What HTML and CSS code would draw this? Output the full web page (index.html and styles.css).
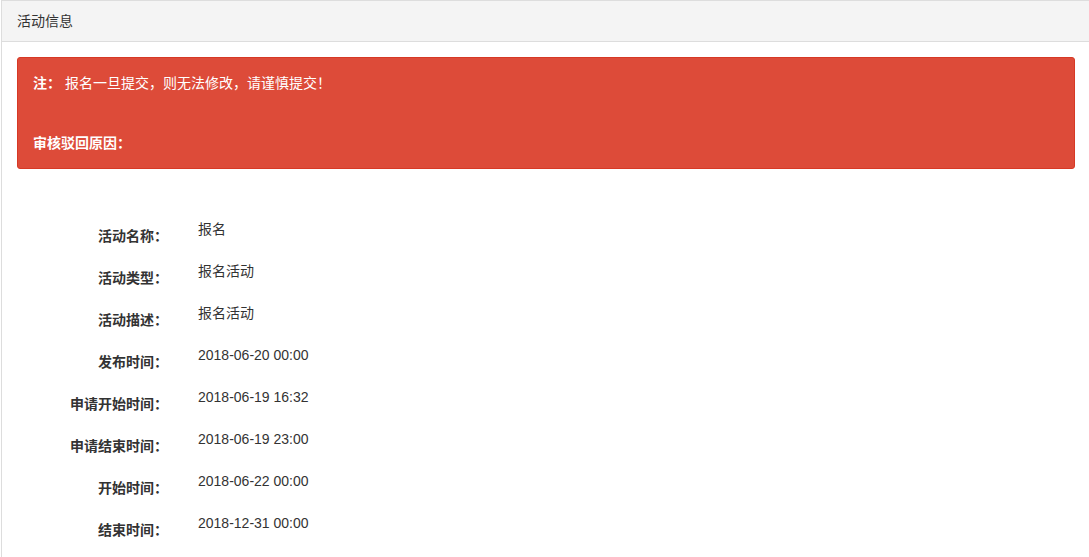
FILE: index.html
```html
<!DOCTYPE html>
<html>
<head>
    <meta charset="utf-8">
    <link rel="stylesheet" href="styles.css">
</head>
<body>

<div class="panel">
    <div class="panel-heading">活动信息</div>
    <div class="panel-body">
        <div class="alert">
            <div><b>注：</b> 报名一旦提交，则无法修改，请谨慎提交！</div>
            <div class="reason"><b>审核驳回原因：</b></div>
        </div>

        <div class="form">
            <div class="form-group">
                <label class="control-label">活动名称：</label>
                <div class="control-value">报名</div>
            </div>
            <div class="form-group">
                <label class="control-label">活动类型：</label>
                <div class="control-value">报名活动</div>
            </div>
            <div class="form-group">
                <label class="control-label">活动描述：</label>
                <div class="control-value">报名活动</div>
            </div>
            <div class="form-group">
                <label class="control-label">发布时间：</label>
                <div class="control-value">2018-06-20 00:00</div>
            </div>
            <div class="form-group">
                <label class="control-label">申请开始时间：</label>
                <div class="control-value">2018-06-19 16:32</div>
            </div>
            <div class="form-group">
                <label class="control-label">申请结束时间：</label>
                <div class="control-value">2018-06-19 23:00</div>
            </div>
            <div class="form-group">
                <label class="control-label">开始时间：</label>
                <div class="control-value">2018-06-22 00:00</div>
            </div>
            <div class="form-group">
                <label class="control-label">结束时间：</label>
                <div class="control-value">2018-12-31 00:00</div>
            </div>
        </div>
    </div>
</div>

</body>
</html>
```

FILE: styles.css
```css
html, body {
    overflow: hidden;
}
body {
    font-family: "Liberation Sans", Arial, "Noto Sans CJK SC", sans-serif;
    font-size: 14px;
    line-height: 20px;
    color: #333;
    margin: 0;
    padding: 0;
    background-color: #fff;
}
.panel {
    margin-left: 1px;
    width: 1088px;
    border: 1px solid #ddd;
    border-bottom: none;
}
.panel-heading {
    padding: 10px 15px;
    background-color: #f4f4f4;
    border-bottom: 1px solid #ddd;
}
.panel-body {
    padding: 15px;
}
.alert {
    background-color: #dd4b39;
    border: 1px solid #d73925;
    border-radius: 3px;
    color: #fff;
    padding: 15px;
    margin-bottom: 20px;
}
.alert .reason {
    margin-top: 40px;
}
.form {
    padding-top: 30px;
    margin: 0 -15px;
}
.form-group {
    display: flex;
    margin-bottom: 15px;
}
.control-label {
    width: 168px;
    padding: 7px 15px 0 0;
    text-align: right;
    font-weight: bold;
}
.control-value {
    padding-left: 13px;
}
.control-label::after {
    content: "";
    display: inline-block;
    width: 2px;
}
```
